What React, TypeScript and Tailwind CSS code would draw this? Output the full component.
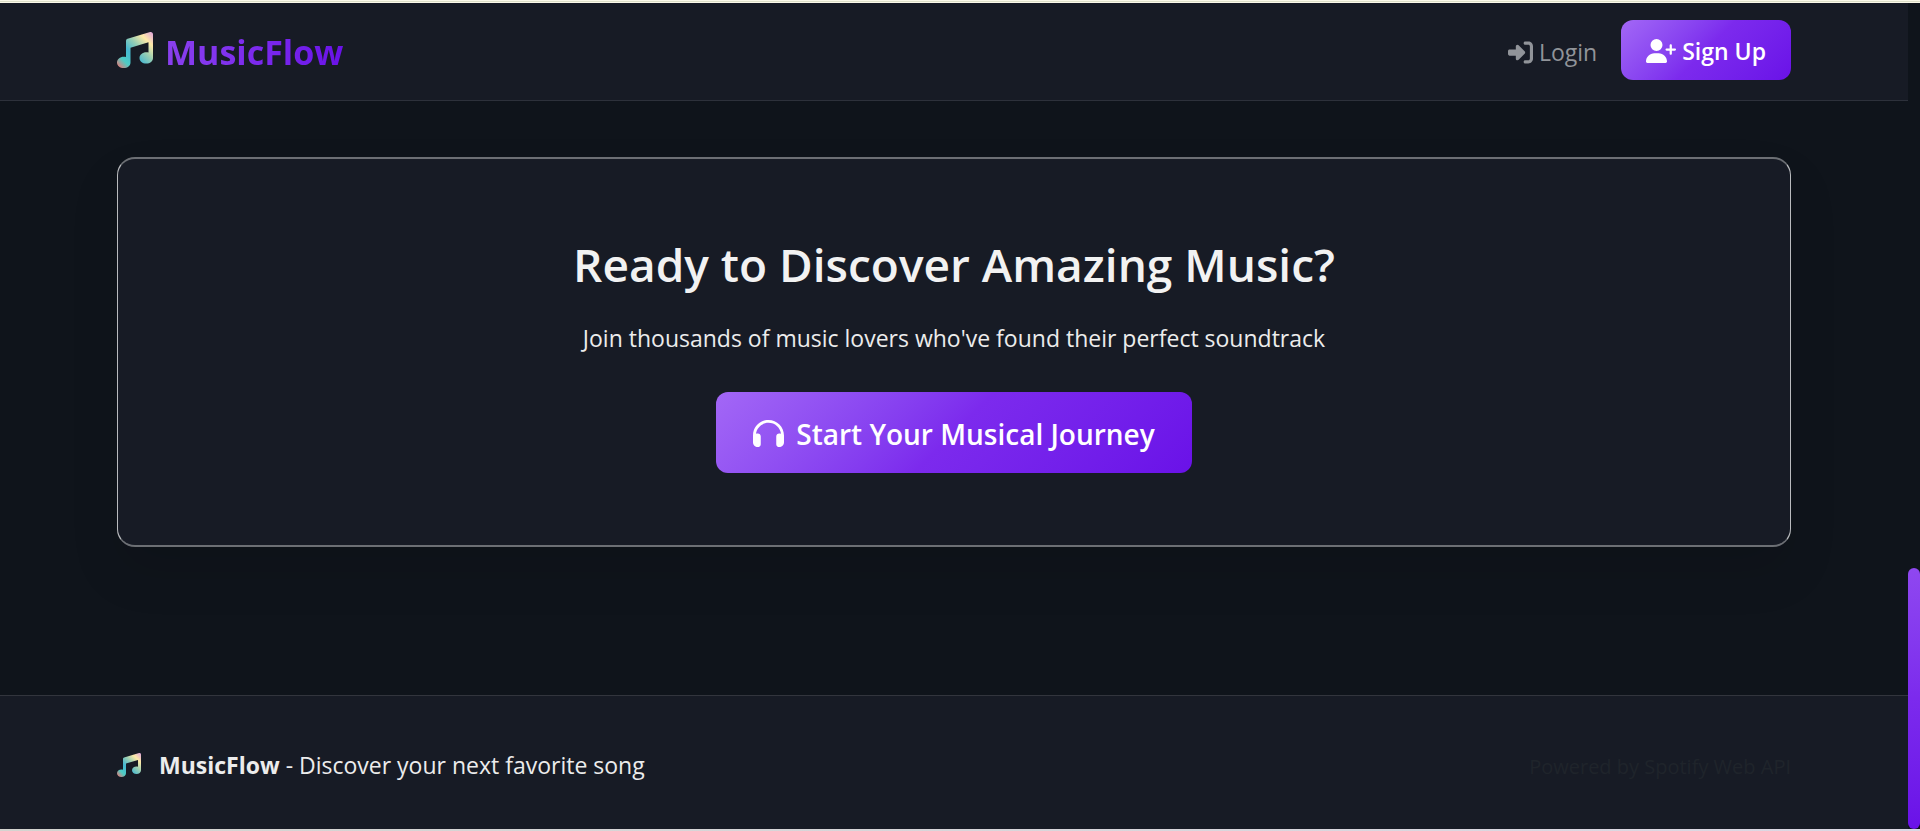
import React from 'react';
import { FaHeadphones, FaMusic, FaRightToBracket, FaUserPlus } from 'react-icons/fa6';

interface NoteIconProps {
  id: string;
  className: string;
}

// Music note filled with the rainbow brand gradient
function NoteIcon({ id, className }: NoteIconProps) {
  return (
    <>
      <svg width="0" height="0" className="absolute" aria-hidden="true">
        <defs>
          <linearGradient id={id} x1="0" y1="1" x2="1" y2="0">
            <stop offset="0%" stopColor="#ff6b6b" />
            <stop offset="20%" stopColor="#4ecdc4" />
            <stop offset="40%" stopColor="#45b7d1" />
            <stop offset="60%" stopColor="#96ceb4" />
            <stop offset="80%" stopColor="#ffeaa7" />
            <stop offset="100%" stopColor="#dda0dd" />
          </linearGradient>
        </defs>
      </svg>
      <FaMusic fill={`url(#${id})`} className={className} aria-hidden="true" />
    </>
  );
}

function Navbar() {
  return (
    <header className="border-b border-[#2d313b] bg-[#171b25] pt-[17px] pb-5">
      <nav className="mx-auto flex w-full max-w-[1674px] items-center justify-between">
        <a href="#" className="flex items-center gap-3">
          <NoteIcon id="note-nav" className="size-9" />
          <span className="bg-linear-to-r from-[#8a40ee] via-[#7c2aed] to-[#6a11e8] bg-clip-text pt-1 text-[34px] leading-[48px] font-bold text-transparent">
            MusicFlow
          </span>
        </a>

        <div className="flex items-center gap-6">
          <a href="#" className="flex items-center gap-1.5 pt-1 text-[23px] text-[#919499]">
            <FaRightToBracket className="size-[25px]" aria-hidden="true" />
            <span>Login</span>
          </a>
          <button className="flex h-[60px] items-center gap-1.5 rounded-xl bg-linear-135 from-[#a367f6] via-[#7c2aed] to-[#6a11e8] px-[25px] pt-0.5 text-[23px] font-semibold text-white">
            <FaUserPlus className="h-6 w-[30px]" aria-hidden="true" />
            <span>Sign Up</span>
          </button>
        </div>
      </nav>
    </header>
  );
}

function CallToAction() {
  return (
    <main className="flex-1 pt-14">
      <section className="mx-auto flex h-[390px] w-full max-w-[1674px] flex-col items-center rounded-[18px] border-x border-y-2 border-x-[#b9bbbe] border-y-[#6c6f74] bg-[#171b25] pt-[75px] shadow-[0_25px_50px_rgba(0,0,0,0.1)]">
        <h2 className="text-[46px] leading-[60px] font-semibold text-[#f2f2f2]">
          Ready to Discover Amazing Music?
        </h2>
        <p className="mt-[26px] text-[23px] leading-9 text-[#ececec]">
          Join thousands of music lovers who've found their perfect soundtrack
        </p>
        <button className="mt-9 flex h-[81px] items-center gap-3 rounded-xl bg-linear-135 from-[#a367f6] via-[#7c2aed] to-[#6a11e8] px-[37px] pt-0.5 text-[28px] font-semibold text-white">
          <FaHeadphones className="size-[31px]" aria-hidden="true" />
          <span>Start Your Musical Journey</span>
        </button>
      </section>
    </main>
  );
}

function Footer() {
  return (
    <footer className="border-t border-[#32353d] bg-[#171b25] pt-[51px] pb-[46px]">
      <div className="mx-auto flex w-full max-w-[1674px] items-center justify-between">
        <p className="flex items-center text-[23px] leading-9 text-[#ececec]">
          <NoteIcon id="note-footer" className="mr-[18px] size-6" />
          <span>
            <strong className="font-bold">MusicFlow</strong> - Discover your next favorite song
          </span>
        </p>
        <small className="pt-1 text-xl text-[#1f242b]">Powered by Spotify Web API</small>
      </div>
    </footer>
  );
}

export default function App() {
  return (
    <div className="flex min-h-screen flex-col bg-[#0f141b] font-['Open_Sans','Noto_Sans',sans-serif]">
      <div className="h-[3px] border-y border-[#fbf9e9] bg-[#dddfc8]" />
      <div className="flex flex-1">
        <div className="flex min-w-0 flex-1 flex-col">
          <Navbar />
          <CallToAction />
          <Footer />
        </div>
        {/* Scrollbar track and thumb */}
        <div className="flex w-3 flex-col justify-end">
          <div className="h-[261px] rounded-full bg-linear-to-b from-[#8f47f0] via-[#7c2aed] to-[#6a11e8]" />
        </div>
      </div>
      <div className="h-0.5 bg-linear-to-r from-[#d4d4d0] to-[#dcd8e4]" />
    </div>
  );
}
